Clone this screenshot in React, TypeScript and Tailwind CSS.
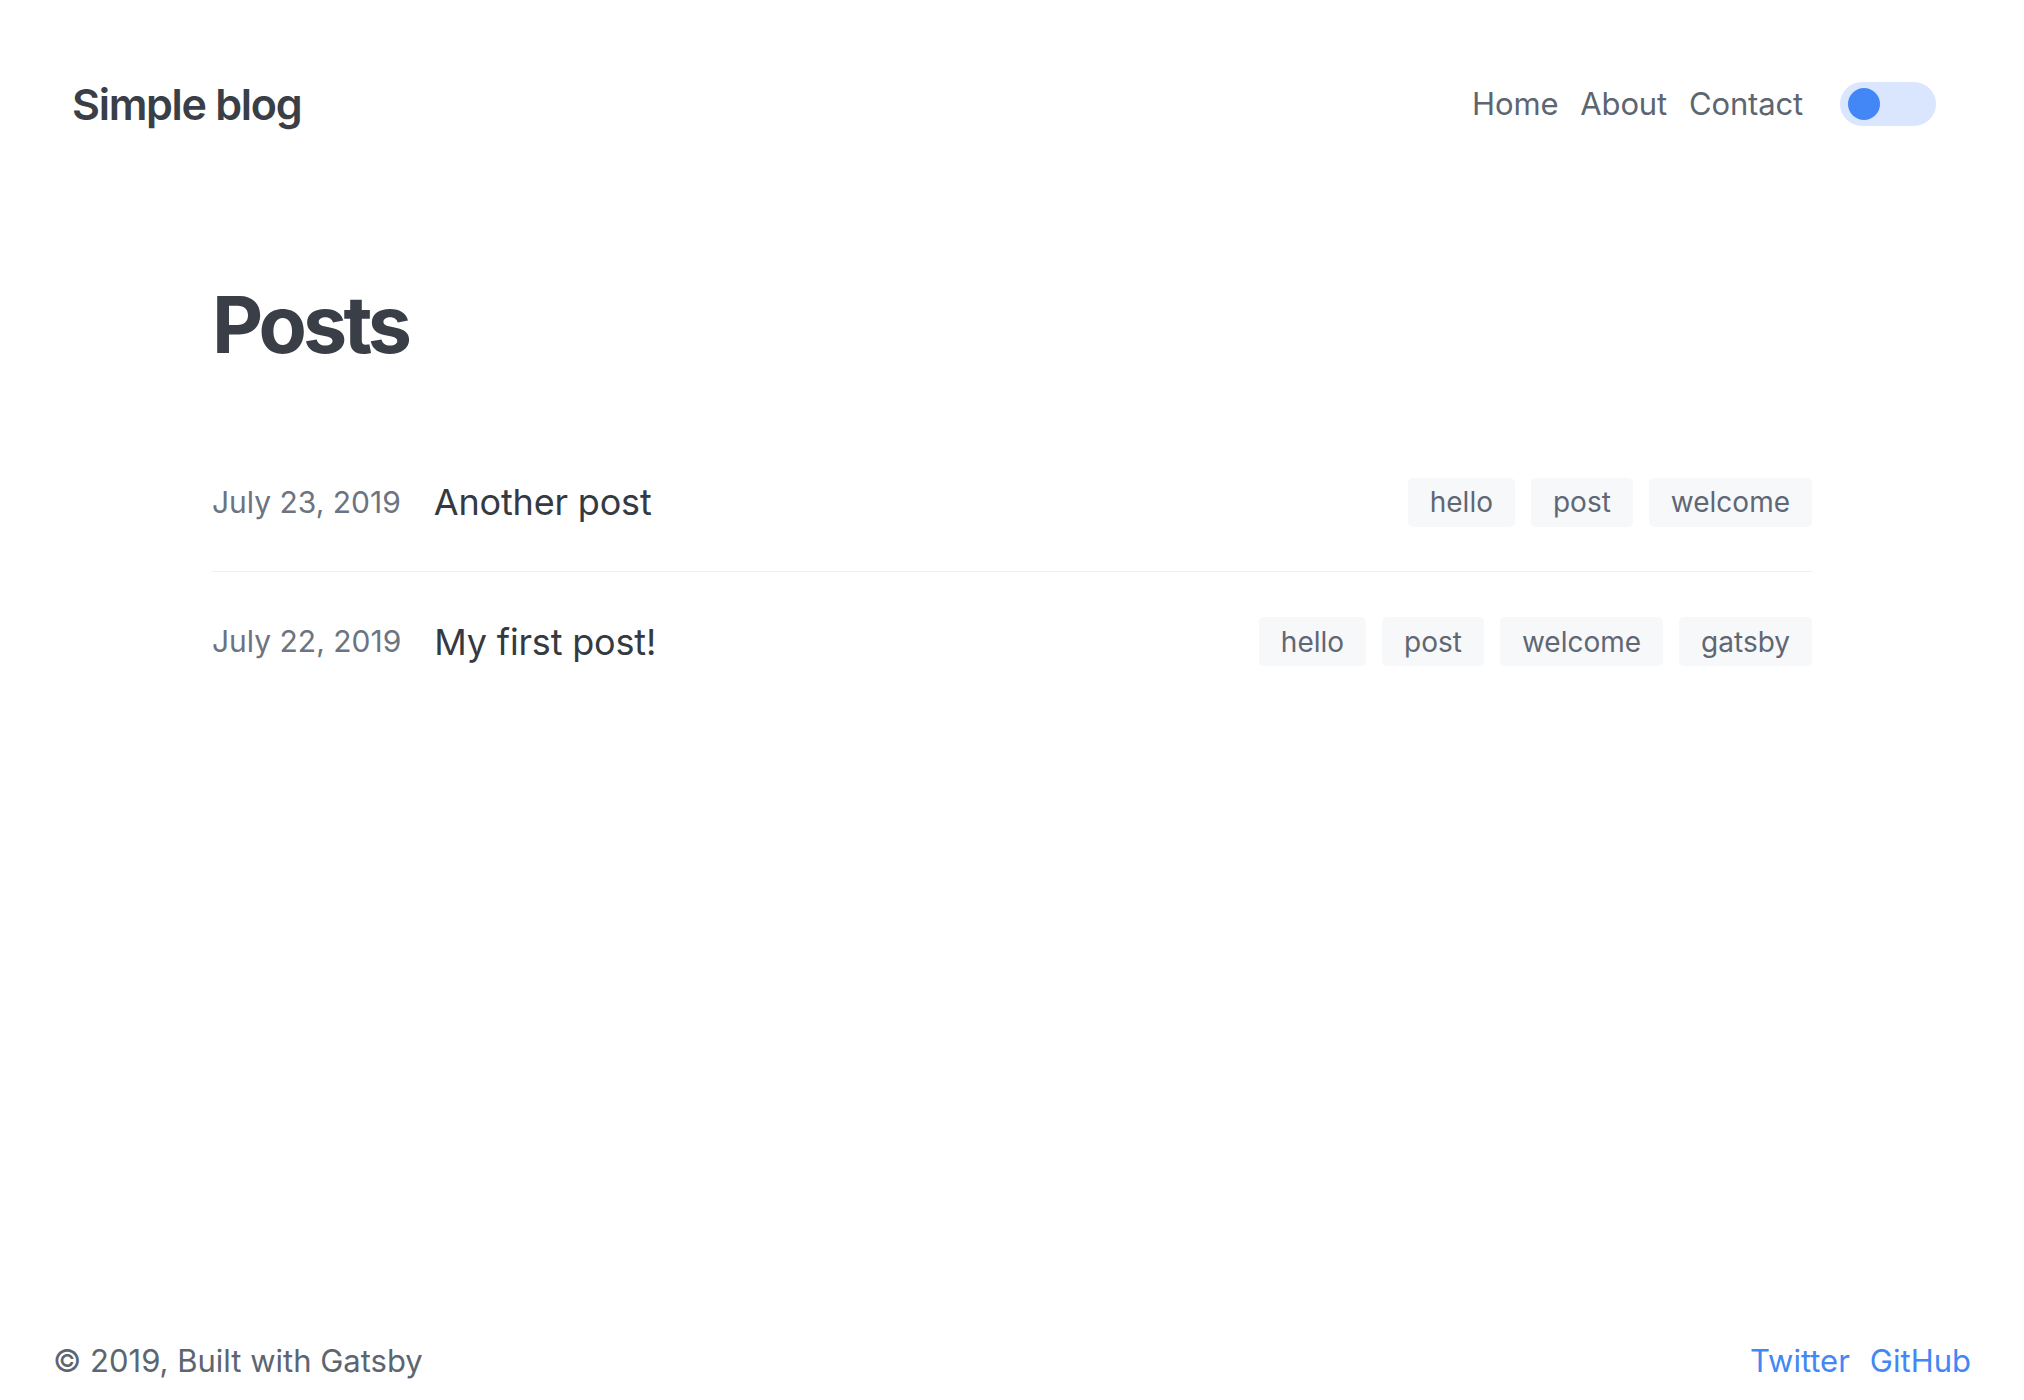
import React from "react";

const posts = [
  { date: "July 23, 2019", title: "Another post", tags: ["hello", "post", "welcome"] },
  { date: "July 22, 2019", title: "My first post!", tags: ["hello", "post", "welcome", "gatsby"] },
];

const Header = () => (
  <header className="flex h-[208px] items-center justify-between pl-[72px] pr-[88px]">
    <a className="text-[43px] font-semibold tracking-[-0.03em] text-[#3a3f47]">Simple blog</a>
    <div className="flex items-center">
      <nav className="flex items-center gap-[22px] text-[31px] tracking-[-0.005em] text-[#5c6570]">
        <a>Home</a>
        <a>About</a>
        <a>Contact</a>
      </nav>
      {/* theme toggle */}
      <button className="ml-[37px] flex h-[44px] w-[96px] items-center rounded-full bg-[#d9e6fd] px-[8px]">
        <span className="h-[32px] w-[32px] rounded-full bg-[#4287f5]" />
      </button>
    </div>
  </header>
);

const PostRow = ({ date, title, tags, last }: { date: string; title: string; tags: string[]; last: boolean }) => (
  <div className={`flex h-[139px] items-center justify-between ${last ? "" : "border-b border-[#eef1f4]"}`}>
    <div className="flex items-center gap-[33px]">
      <span className="text-[30px] text-[#6b7480]">{date}</span>
      <a className="text-[36px] tracking-[-0.005em] text-[#343a42]">{title}</a>
    </div>
    <div className="flex gap-[16px]">
      {tags.map((t) => (
        <span key={t} className="flex h-[49px] items-center rounded-[5px] bg-[#f7f8fa] px-[22px] text-[28px] text-[#5f6774]">
          {t}
        </span>
      ))}
    </div>
  </div>
);

const App = () => {
  return (
    <div className="flex min-h-screen flex-col bg-white font-['Inter',sans-serif]">
      <Header />
      <main className="mx-auto w-[1600px]">
        <h1 className="mt-[77px] text-[79px] font-bold leading-none tracking-[-0.05em] text-[#3a3f47]">Posts</h1>
        <div className="mt-[69px]">
          {posts.map((p, i) => (
            <PostRow key={p.title} {...p} last={i === posts.length - 1} />
          ))}
        </div>
      </main>
      <footer className="mt-auto flex items-center justify-between pb-[16px] pl-[53px] pr-[53px] text-[31px] leading-[1.5]">
        <span className="text-[#5c6570]">© 2019, Built with Gatsby</span>
        <div className="flex gap-[20px] text-[#4287f5]">
          <a>Twitter</a>
          <a>GitHub</a>
        </div>
      </footer>
    </div>
  );
};

export default App;
